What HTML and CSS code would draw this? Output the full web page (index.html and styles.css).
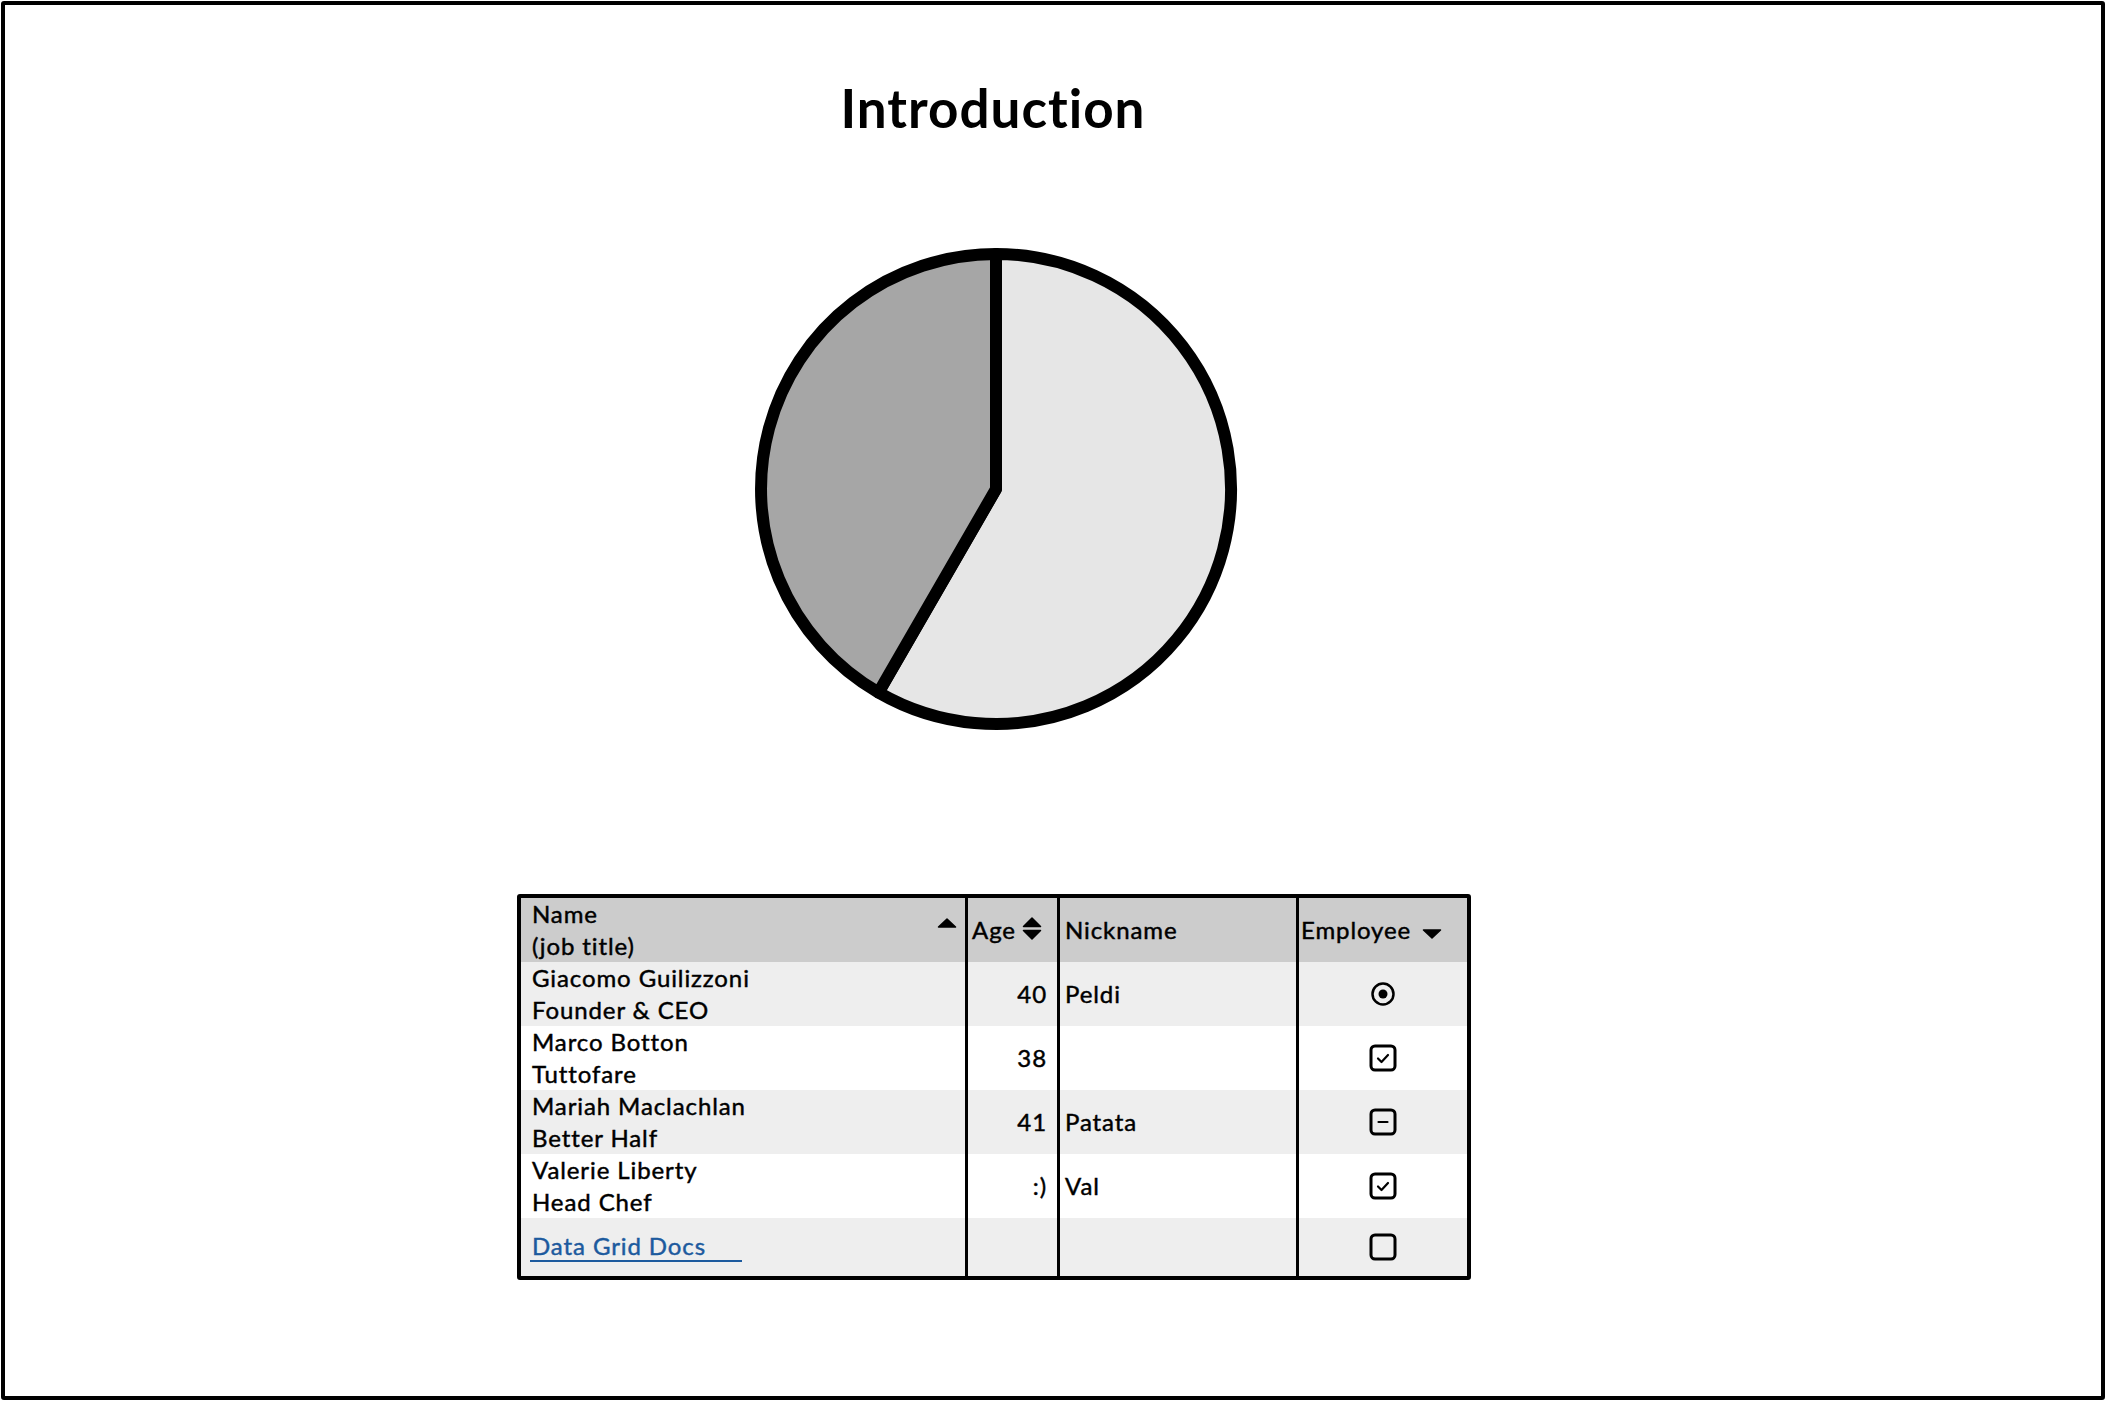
FILE: index.html
```html
<!DOCTYPE html>
<html>
<head>
<meta charset="utf-8">
<link rel="stylesheet" href="styles.css">
</head>
<body>
<div class="frame">
  <div class="content">
    <h1 class="title">Introduction</h1>
    <svg class="pie" width="500" height="500" viewBox="0 0 500 500">
      <path d="M250 250 L250 15 A235 235 0 1 1 132.5 453.5 Z" fill="#e6e6e6" stroke="#000" stroke-width="12" stroke-linejoin="round"/>
      <path d="M250 250 L132.5 453.5 A235 235 0 0 1 250 15 Z" fill="#a6a6a6" stroke="#000" stroke-width="12" stroke-linejoin="round"/>
    </svg>
    <div class="grid">
      <div class="cell head name">
        <div class="two">Name<br>(job title)</div>
        <svg class="arrow-up" width="20" height="10" viewBox="0 0 20 10"><path d="M10 1 L18.5 9 L1.5 9 Z" fill="#000" stroke="#000" stroke-width="1.5" stroke-linejoin="round"/></svg>
      </div>
      <div class="cell head age">
        <span>Age</span>
        <svg class="arrow-both" width="20" height="24" viewBox="0 0 20 24"><path d="M10 1 L18.5 9.5 L1.5 9.5 Z M1.5 13.5 L18.5 13.5 L10 22 Z" fill="#000" stroke="#000" stroke-width="1.5" stroke-linejoin="round"/></svg>
      </div>
      <div class="cell head nick">Nickname</div>
      <div class="cell head emp">
        <span>Employee</span>
        <svg class="arrow-down" width="20" height="10" viewBox="0 0 20 10"><path d="M1.5 1 L18.5 1 L10 9 Z" fill="#000" stroke="#000" stroke-width="1.5" stroke-linejoin="round"/></svg>
      </div>

      <div class="cell odd name"><div class="two">Giacomo Guilizzoni<br>Founder &amp; CEO</div></div>
      <div class="cell odd age num">40</div>
      <div class="cell odd nick">Peldi</div>
      <div class="cell odd emp center">
        <svg width="26" height="26" viewBox="0 0 26 26"><circle cx="13" cy="13" r="10.5" fill="none" stroke="#000" stroke-width="2.5"/><circle cx="13" cy="13" r="4.5" fill="#000"/></svg>
      </div>

      <div class="cell even name"><div class="two">Marco Botton<br>Tuttofare</div></div>
      <div class="cell even age num">38</div>
      <div class="cell even nick"></div>
      <div class="cell even emp center">
        <svg width="28" height="28" viewBox="0 0 28 28"><rect x="2" y="2" width="24" height="24" rx="4" fill="none" stroke="#000" stroke-width="3"/><path d="M9 14.5 L12.5 18 L19 11" fill="none" stroke="#000" stroke-width="2.2" stroke-linecap="round" stroke-linejoin="round"/></svg>
      </div>

      <div class="cell odd name"><div class="two">Mariah Maclachlan<br>Better Half</div></div>
      <div class="cell odd age num">41</div>
      <div class="cell odd nick">Patata</div>
      <div class="cell odd emp center">
        <svg width="28" height="28" viewBox="0 0 28 28"><rect x="2" y="2" width="24" height="24" rx="4" fill="none" stroke="#000" stroke-width="3"/><path d="M9.5 14 L18.5 14" fill="none" stroke="#000" stroke-width="2.2" stroke-linecap="round"/></svg>
      </div>

      <div class="cell even name"><div class="two">Valerie Liberty<br>Head Chef</div></div>
      <div class="cell even age num">:)</div>
      <div class="cell even nick">Val</div>
      <div class="cell even emp center">
        <svg width="28" height="28" viewBox="0 0 28 28"><rect x="2" y="2" width="24" height="24" rx="4" fill="none" stroke="#000" stroke-width="3"/><path d="M9 14.5 L12.5 18 L19 11" fill="none" stroke="#000" stroke-width="2.2" stroke-linecap="round" stroke-linejoin="round"/></svg>
      </div>

      <div class="cell odd last name"><a class="link" href="#">Data Grid Docs</a></div>
      <div class="cell odd last age"></div>
      <div class="cell odd last nick"></div>
      <div class="cell odd last emp center">
        <svg width="28" height="28" viewBox="0 0 28 28"><rect x="2" y="2" width="24" height="24" rx="4" fill="none" stroke="#000" stroke-width="3"/></svg>
      </div>
    </div>
  </div>
</div>
</body>
</html>
```

FILE: styles.css
```css
html, body {
  margin: 0;
  padding: 0;
  background: #fff;
}
body {
  font-family: "Lato", "Open Sans", sans-serif;
  color: #000;
}
.frame {
  margin: 1px;
  width: 2104px;
  height: 1399px;
  box-sizing: border-box;
  border: 4px solid #000;
  border-radius: 3px;
  overflow: hidden;
}
.content {
  width: 1976px;
  display: flex;
  flex-direction: column;
  align-items: center;
}
.title {
  margin: 71px 0 0 0;
  font-size: 53px;
  line-height: 64px;
  font-weight: 700;
  letter-spacing: 1px;
  height: 64px;
}
.pie {
  display: block;
  margin-top: 99px;
  margin-left: 6px;
}
.grid {
  margin-top: 155px;
  display: grid;
  grid-template-columns: 447px 92px 239px 168px;
  grid-template-rows: 64px 64px 64px 64px 64px 58px;
  border: 4px solid #000;
  border-radius: 3px;
  font-size: 24px;
  font-weight: 400;
  letter-spacing: 0.9px;
  line-height: 32px;
  -webkit-text-stroke: 0.45px currentColor;
  margin-left: 2px;
}
.cell {
  box-sizing: border-box;
  display: flex;
  align-items: center;
  border-right: 3px solid #000;
  white-space: nowrap;
}
.cell.emp {
  border-right: none;
}
.head { background: #cccccc; }
.odd { background: #eeeeee; }
.even { background: #ffffff; }
.name {
  padding-left: 11px;
  padding-right: 8px;
  justify-content: space-between;
}
.age {
  padding-left: 4px;
  padding-right: 10px;
}
.num {
  justify-content: flex-end;
}
.nick {
  padding-left: 5px;
}
.emp {
  padding-left: 2px;
}
.center {
  justify-content: center;
  padding-left: 0;
}
.head.name .arrow-up {
  align-self: flex-start;
  margin-top: 20px;
}
.head.age .arrow-both {
  margin-left: 6px;
  margin-top: -2px;
}
.head.emp .arrow-down {
  margin-left: 11px;
  margin-top: 8px;
}
.last.name {
  align-items: flex-start;
  padding-top: 14px;
}
.link {
  color: #1c5a9e;
  text-decoration: none;
  display: inline-block;
  line-height: 28px;
  padding-right: 36px;
  border-bottom: 2px solid #1c5a9e;
  margin-left: -2px;
  padding-left: 2px;
}
```
